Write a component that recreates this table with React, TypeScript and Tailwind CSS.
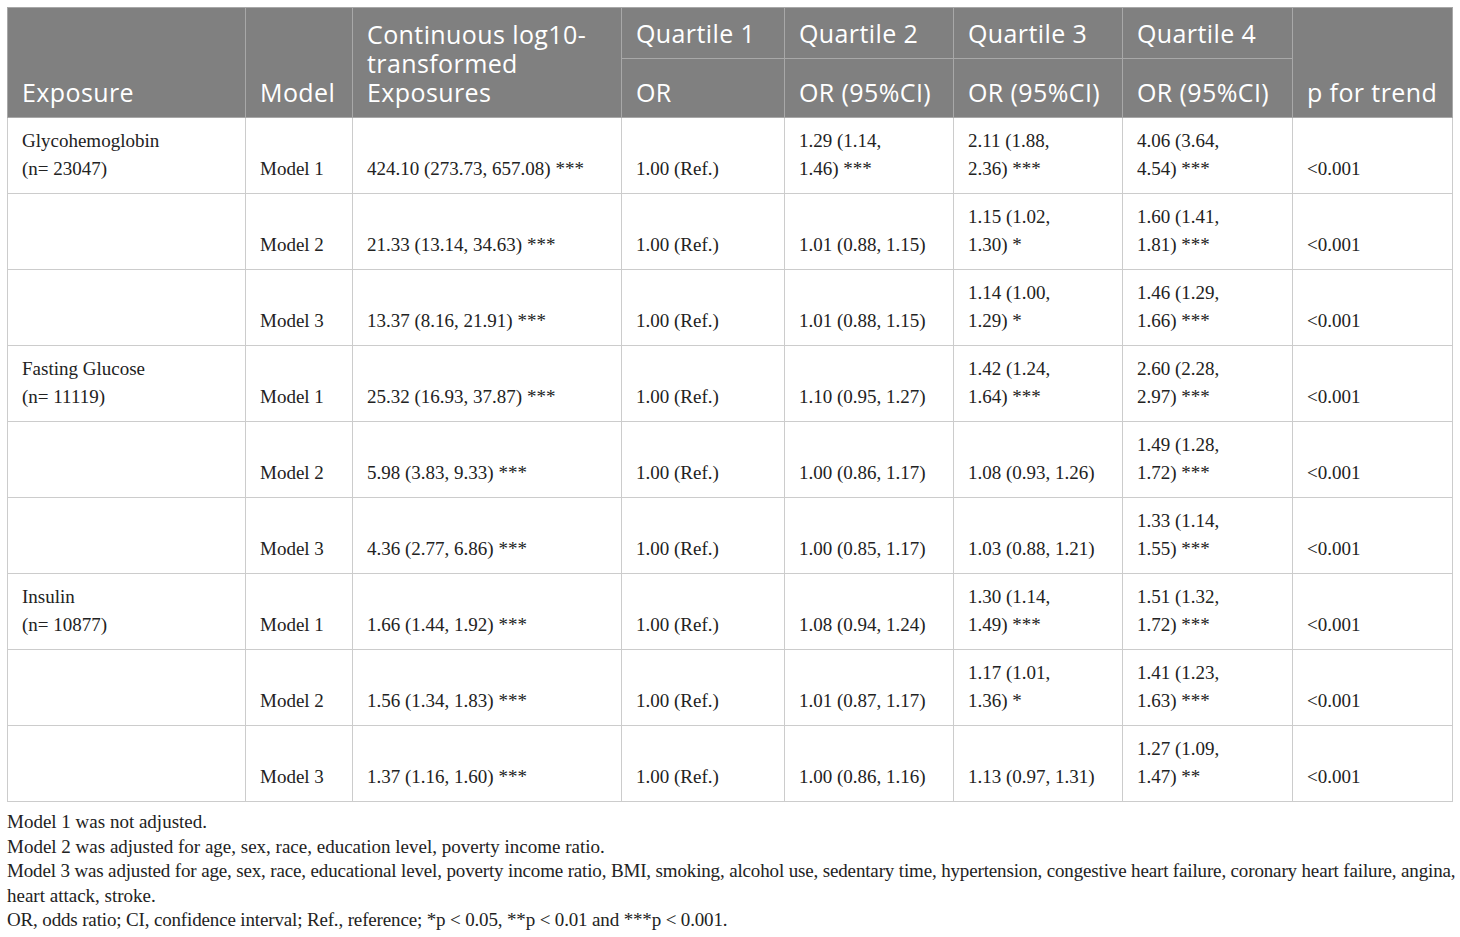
import React from "react";

type Row = {
  exposure?: [string, string];
  model: string;
  cells: string[][];
  trend: string;
};

const rows: Row[] = [
  {
    exposure: ["Glycohemoglobin", "(n= 23047)"],
    model: "Model 1",
    cells: [["424.10 (273.73, 657.08) ***"], ["1.00 (Ref.)"], ["1.29 (1.14,", "1.46) ***"], ["2.11 (1.88,", "2.36) ***"], ["4.06 (3.64,", "4.54) ***"]],
    trend: "<0.001",
  },
  {
    model: "Model 2",
    cells: [["21.33 (13.14, 34.63) ***"], ["1.00 (Ref.)"], ["1.01 (0.88, 1.15)"], ["1.15 (1.02,", "1.30) *"], ["1.60 (1.41,", "1.81) ***"]],
    trend: "<0.001",
  },
  {
    model: "Model 3",
    cells: [["13.37 (8.16, 21.91) ***"], ["1.00 (Ref.)"], ["1.01 (0.88, 1.15)"], ["1.14 (1.00,", "1.29) *"], ["1.46 (1.29,", "1.66) ***"]],
    trend: "<0.001",
  },
  {
    exposure: ["Fasting Glucose", "(n= 11119)"],
    model: "Model 1",
    cells: [["25.32 (16.93, 37.87) ***"], ["1.00 (Ref.)"], ["1.10 (0.95, 1.27)"], ["1.42 (1.24,", "1.64) ***"], ["2.60 (2.28,", "2.97) ***"]],
    trend: "<0.001",
  },
  {
    model: "Model 2",
    cells: [["5.98 (3.83, 9.33) ***"], ["1.00 (Ref.)"], ["1.00 (0.86, 1.17)"], ["1.08 (0.93, 1.26)"], ["1.49 (1.28,", "1.72) ***"]],
    trend: "<0.001",
  },
  {
    model: "Model 3",
    cells: [["4.36 (2.77, 6.86) ***"], ["1.00 (Ref.)"], ["1.00 (0.85, 1.17)"], ["1.03 (0.88, 1.21)"], ["1.33 (1.14,", "1.55) ***"]],
    trend: "<0.001",
  },
  {
    exposure: ["Insulin", "(n= 10877)"],
    model: "Model 1",
    cells: [["1.66 (1.44, 1.92) ***"], ["1.00 (Ref.)"], ["1.08 (0.94, 1.24)"], ["1.30 (1.14,", "1.49) ***"], ["1.51 (1.32,", "1.72) ***"]],
    trend: "<0.001",
  },
  {
    model: "Model 2",
    cells: [["1.56 (1.34, 1.83) ***"], ["1.00 (Ref.)"], ["1.01 (0.87, 1.17)"], ["1.17 (1.01,", "1.36) *"], ["1.41 (1.23,", "1.63) ***"]],
    trend: "<0.001",
  },
  {
    model: "Model 3",
    cells: [["1.37 (1.16, 1.60) ***"], ["1.00 (Ref.)"], ["1.00 (0.86, 1.16)"], ["1.13 (0.97, 1.31)"], ["1.27 (1.09,", "1.47) **"]],
    trend: "<0.001",
  },
];

const th = "border border-[#a8a8a8] align-bottom text-left font-normal px-[14px] pb-[10px] leading-[29px]";
const td = "border border-[#cccccc] align-bottom text-left px-[14px] pb-[10px] leading-[28px]";

function Lines({ lines }: { lines: string[] }) {
  return (
    <>
      {lines.map((l, i) => (
        <div key={i} className="whitespace-nowrap">{l}</div>
      ))}
    </>
  );
}

export default function App() {
  return (
    <div className="w-[1460px] h-[937px] bg-white pl-[7px] pt-[7px] overflow-hidden">
      <table className="w-[1445px] table-fixed border-collapse">
        <colgroup>
          <col className="w-[238px]" />
          <col className="w-[107px]" />
          <col className="w-[269px]" />
          <col className="w-[163px]" />
          <col className="w-[169px]" />
          <col className="w-[169px]" />
          <col className="w-[170px]" />
          <col className="w-[160px]" />
        </colgroup>
        <thead className="bg-[#808080] text-white text-[25px] font-['Open_Sans',sans-serif] tracking-[0.4px]">
          <tr className="h-[51px]">
            <th rowSpan={2} className={th}>Exposure</th>
            <th rowSpan={2} className={th}>Model</th>
            <th rowSpan={2} className={th}>
              Continuous log10-
              <br />
              transformed
              <br />
              Exposures
            </th>
            <th className={th}>Quartile 1</th>
            <th className={th}>Quartile 2</th>
            <th className={th}>Quartile 3</th>
            <th className={th}>Quartile 4</th>
            <th rowSpan={2} className={th}>p for trend</th>
          </tr>
          <tr className="h-[59px]">
            <th className={th}>OR</th>
            <th className={th}>OR (95%CI)</th>
            <th className={th}>OR (95%CI)</th>
            <th className={th}>OR (95%CI)</th>
          </tr>
        </thead>
        <tbody className="text-[19px] text-[#222222] font-['Liberation_Serif',serif]">
          {rows.map((r, i) => (
            <tr key={i} className="h-[76px]">
              <td className={td}>{r.exposure ? <Lines lines={r.exposure} /> : null}</td>
              <td className={td}>{r.model}</td>
              {r.cells.map((c, j) => (
                <td key={j} className={td}>
                  <Lines lines={c} />
                </td>
              ))}
              <td className={td}>{r.trend}</td>
            </tr>
          ))}
        </tbody>
      </table>
      <div className="mt-[8px] text-[19px] leading-[24.5px] text-[#222222] font-['Liberation_Serif',serif]">
        <p>Model 1 was not adjusted.</p>
        <p>Model 2 was adjusted for age, sex, race, education level, poverty income ratio.</p>
        <p className="whitespace-nowrap tracking-[-0.15px]">
          Model 3 was adjusted for age, sex, race, educational level, poverty income ratio, BMI, smoking, alcohol use, sedentary time, hypertension, congestive heart failure, coronary heart failure, angina,
        </p>
        <p>heart attack, stroke.</p>
        <p className="tracking-[-0.15px]">OR, odds ratio; CI, confidence interval; Ref., reference; *p &lt; 0.05, **p &lt; 0.01 and ***p &lt; 0.001.</p>
      </div>
    </div>
  );
}
